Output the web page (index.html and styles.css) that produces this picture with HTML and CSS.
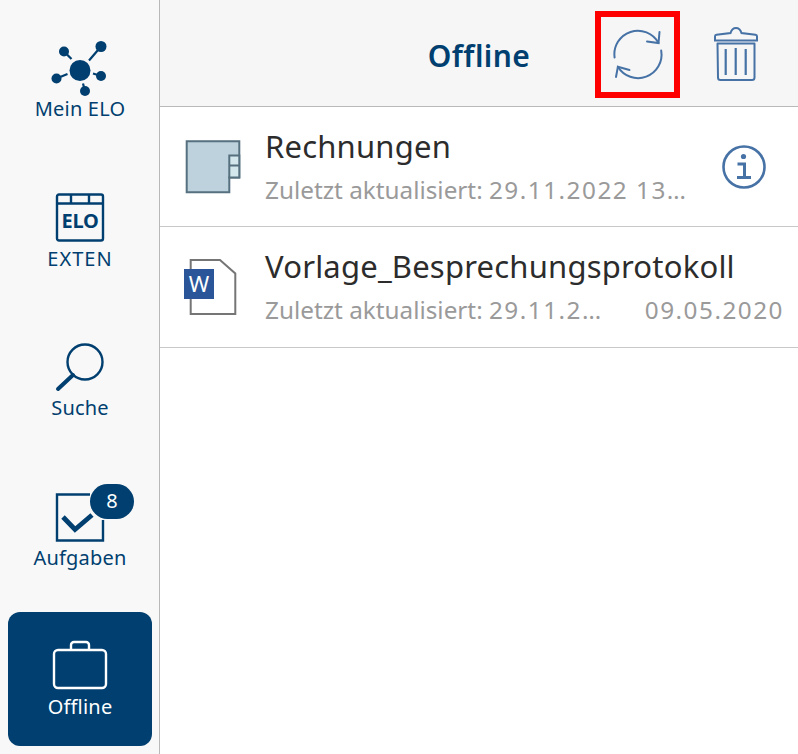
FILE: index.html
```html
<!DOCTYPE html>
<html lang="de">
<head>
<meta charset="utf-8">
<title>Offline</title>
<link rel="stylesheet" href="styles.css">
</head>
<body>
<div class="app">
  <nav class="sidebar">
    <a class="nav-item">
      <svg class="nav-icon" viewBox="0 0 56 56" fill="#003f6f" stroke="#003f6f">
        <circle cx="28" cy="30.5" r="10.5" stroke="none"/>
        <circle cx="12" cy="11.5" r="5" stroke="none"/><circle cx="49" cy="6.5" r="5.5" stroke="none"/>
        <circle cx="4.5" cy="38.5" r="5" stroke="none"/><circle cx="49" cy="36" r="5" stroke="none"/><circle cx="33" cy="51" r="5" stroke="none"/>
        <path d="M12 11.5 19.500 19M49 6.500 37 20.500M4.500 38.500 15.500 34M49 36 41 33.500M33 51 31 43.500" stroke-width="2.200" fill="none"/>
      </svg>
      <span class="nav-label">Mein ELO</span>
    </a>
    <a class="nav-item">
      <svg class="nav-icon" viewBox="0 0 56 56" fill="none" stroke="#003f6f" stroke-width="2.400">
        <rect x="5" y="4.500" width="46" height="46" rx="2"/>
        <path d="M5 13.500H51M19 4.500V13.500M37 4.500V13.500"/>
        <text x="28" y="38" class="elo">ELO</text>
      </svg>
      <span class="nav-label label-caps">EXTEN</span>
    </a>
    <a class="nav-item">
      <svg class="nav-icon" viewBox="0 0 56 56" fill="none" stroke="#003f6f">
        <circle cx="33" cy="23" r="17.500" stroke-width="2.400"/>
        <path d="M21 36 6 50" stroke-width="4" stroke-linecap="round"/>
      </svg>
      <span class="nav-label">Suche</span>
    </a>
    <a class="nav-item">
      <span class="icon-wrap">
        <svg class="nav-icon" viewBox="0 0 56 56" fill="none" stroke="#003f6f">
          <path d="M38 5.500H5V51.500H51V31" stroke-width="2.400"/>
          <path d="M11 28 23 40.500 40 26" stroke-width="4.800"/>
        </svg>
        <span class="badge">8</span>
      </span>
      <span class="nav-label">Aufgaben</span>
    </a>
    <a class="nav-item active">
      <svg class="nav-icon" viewBox="0 0 56 56" fill="none" stroke="#fff" stroke-width="2.400">
        <rect x="2" y="12" width="52" height="38" rx="4"/>
        <path d="M19 12V7A3 3 0 0 1 22 4H34A3 3 0 0 1 37 7V12"/>
      </svg>
      <span class="nav-label">Offline</span>
    </a>
  </nav>
  <main class="main">
    <header class="header">
      <span></span>
      <h1 class="title">Offline</h1>
      <div class="actions">
        <button class="btn btn-marked">
          <svg class="refresh" viewBox="0 0 52 52" fill="none" stroke="#4672a6" stroke-width="2" stroke-linecap="round">
            <path d="M2.600 28.500A23.500 23.500 0 0 1 46.500 14"/>
            <path d="M35 12.500 46.500 14 47.500 3"/>
            <path d="M49.200 21.600A23.500 23.500 0 0 1 5.900 37.700"/>
            <path d="M4 48 5.900 37.700 17.500 41"/>
          </svg>
        </button>
        <button class="btn btn-trash">
          <svg class="trash" viewBox="0 0 44 54" fill="none" stroke="#4672a6" stroke-width="2">
            <path d="M1 13.500V9.500Q1 8 2.500 7.800L16.500 6Q18 1 22 1T27.500 6L41.500 7.800Q43 8 43 9.500V13.500Z"/>
            <path d="M3.500 16.500H40.500V50.500Q40.500 53 38 53H6.500Q4 53 4 50.500Z" stroke-linejoin="round"/>
            <path d="M11.700 22V48M21.700 21V48M31.700 22V48" stroke-width="2.200"/>
          </svg>
        </button>
      </div>
    </header>
    <ul class="list">
      <li class="row">
        <svg class="file-icon" viewBox="0 0 56 56">
          <path d="M1.700 2.200H54.300V38.500H44.300V53.200H1.700Z" fill="#bdd2dc" stroke="#56707f" stroke-width="2"/>
          <path d="M44.300 16.500H54.300V26.500H44.300ZM44.300 26.500H54.300V38.500H44.300Z" fill="#d3e7ec" stroke="#56707f" stroke-width="2"/>
        </svg>
        <div class="text">
          <div class="name">Rechnungen</div>
          <div class="meta"><span class="sub">Zuletzt aktualisiert: <span class="num">29.11.2022 13:45:00</span></span></div>
        </div>
        <svg class="info" viewBox="0 0 44 44" fill="none" stroke="#4672a6">
          <circle cx="22" cy="22" r="20.500" stroke-width="2.600"/>
          <circle cx="21.500" cy="11.500" r="2.600" fill="#4672a6" stroke="none"/>
          <path d="M15.500 19H22.500V31.500M15 32.500H29" stroke-width="3"/>
        </svg>
      </li>
      <li class="row">
        <svg class="file-icon" viewBox="0 0 56 56">
          <path d="M5.700 1H35L50.300 14.500V55H5.700Z" fill="#fff" stroke="#757575" stroke-width="2"/>
          <rect x="-1" y="10" width="30" height="30" fill="#2a5699"/>
          <text x="14" y="33" class="word">W</text>
        </svg>
        <div class="text">
          <div class="name">Vorlage_Besprechungsprotokoll</div>
          <div class="meta"><span class="sub">Zuletzt aktualisiert: <span class="num">29.11.2022 13:45:00</span></span><span class="date">09.05.2020</span></div>
        </div>
      </li>
    </ul>
  </main>
</div>
</body>
</html>
```
FILE: styles.css
```css
* { box-sizing: border-box; }
html, body { margin: 0; height: 100%; }
body { background: #fff; font-family: "Noto Sans", "Open Sans", sans-serif; overflow: hidden; }
.app { display: flex; height: 754px; }

.sidebar {
  width: 160px; flex: none; background: #f8f8f8; border-right: 1px solid #b9b9b9;
  padding: 14px 7px 0 8px; display: flex; flex-direction: column; gap: 15.5px;
}
.nav-item {
  height: 134px; flex: none; padding-top: 26px; border-radius: 12px;
  display: flex; flex-direction: column; align-items: center; color: #003f6f;
}
.nav-item.active { background: #003f6f; color: #fff; }
.nav-icon { width: 56px; height: 56px; display: block; overflow: visible; }
.nav-label { font-size: 20px; line-height: 26px; white-space: nowrap; letter-spacing: .2px; }
.label-caps { letter-spacing: 1px; }
.elo { font-family: "Noto Sans", sans-serif; font-size: 20px; font-weight: 700; fill: #003f6f; stroke: none; text-anchor: middle; letter-spacing: -.3px; }
.icon-wrap { position: relative; display: block; width: 56px; height: 56px; }
.badge {
  position: absolute; left: 38px; top: -5px; width: 44px; height: 35px; border-radius: 18px;
  background: #003f6f; color: #fff; font-size: 20px; line-height: 34px; text-align: center;
}

.main { flex: 1; min-width: 0; }
.header {
  height: 107px; background: #f6f6f6; border-bottom: 1px solid #b9b9b9;
  display: grid; grid-template-columns: 1fr auto 1fr; align-items: center;
}
.title { margin: 6px 0 0; font-size: 30px; font-weight: 600; color: #003f6f; line-height: 40px; letter-spacing: .4px; }
.actions { display: flex; align-items: center; justify-content: flex-end; padding-right: 40px; }
.btn { border: 0; background: none; padding: 0; display: flex; align-items: center; justify-content: center; }
.btn-marked { width: 85px; height: 87px; border: 6px solid #f00; margin: 3px 34px 0 0; }
.refresh { width: 52px; height: 52px; display: block; }
.btn-trash { width: 44px; margin-top: 2px; }
.trash { width: 44px; height: 54px; display: block; }

.list { list-style: none; margin: 0; padding: 0; }
.row {
  height: 120px; border-bottom: 1px solid #c8c8c8; display: flex; align-items: center;
  padding: 0 14px 0 25px;
}
.row + .row { height: 121px; }
.file-icon { width: 56px; height: 56px; flex: none; margin-right: 24px; display: block; overflow: visible; }
.text { flex: 1; min-width: 0; padding-bottom: 2px; }
.name { font-size: 31px; line-height: 42px; color: #2c2c2c; white-space: nowrap; letter-spacing: .2px; }
.meta { display: flex; font-size: 24.300px; line-height: 34px; color: #9a9a9a; gap: 35px; margin-top: 6px; }
.sub { flex: 1; min-width: 0; white-space: nowrap; overflow: hidden; text-overflow: ellipsis; }
.num, .date { letter-spacing: 1.500px; }
.date { flex: none; }
.info { width: 44px; height: 44px; flex: none; margin-left: 32px; margin-right: 18px; display: block; }
.word { font-family: "Noto Sans", sans-serif; font-size: 22px; fill: #fff; text-anchor: middle; }
```
